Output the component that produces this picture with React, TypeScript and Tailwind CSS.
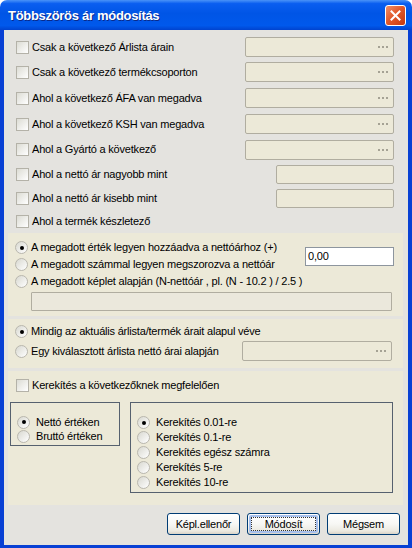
import React from "react";

const Check = () => (
  <span className="w-[13px] h-[13px] shrink-0 border border-[#b4b2a8] bg-[linear-gradient(135deg,#dcdcd4,#ffffff)]" />
);

const Radio = ({ on }: { on?: boolean }) => (
  <span className="w-[13px] h-[13px] shrink-0 rounded-full border border-[#b9b7ae] bg-[linear-gradient(135deg,#d8d8d0,#ffffff)] flex items-center justify-center">
    {on ? <span className="w-[4px] h-[4px] rounded-full bg-black" /> : null}
  </span>
);

const Dots = () => (
  <span className="flex gap-[2px]">
    <span className="w-[2px] h-[2px] bg-[#a5a294]" />
    <span className="w-[2px] h-[2px] bg-[#a5a294]" />
    <span className="w-[2px] h-[2px] bg-[#a5a294]" />
  </span>
);

const Label = ({ children }: { children: React.ReactNode }) => (
  <span className="text-[11px] tracking-[-0.2px] leading-none whitespace-nowrap text-black">{children}</span>
);

const EBox = ({ className }: { className: string }) => (
  <div className={className}>
    <Dots />
  </div>
);

const ebox =
  "ml-auto h-[20px] border border-[#b0ada0] rounded-[2px] bg-[#ece9d8] flex items-center justify-end pr-[5px]";
const pbox = "ml-auto h-[19px] border border-[#b0ada0] rounded-[2px] bg-[#ece9d8]";

const CheckRow = ({
  h,
  label,
  box,
}: {
  h: string;
  label: string;
  box?: React.ReactNode;
}) => (
  <div className={h}>
    <div className="flex items-center h-full">
      <div className="flex items-center gap-[3px]">
        <Check />
        <Label>{label}</Label>
      </div>
      {box}
    </div>
  </div>
);

const Btn = ({ children, focus }: { children: React.ReactNode; focus?: boolean }) => (
  <button className="relative w-[73px] h-[22px] rounded-[3px] border border-[#003c74] bg-[linear-gradient(180deg,#ffffff_0%,#f7f7f4_50%,#ebe9e0_85%,#d8d3c8_100%)] flex items-center justify-center">
    {focus ? (
      <span className="absolute inset-[1px] rounded-[2px] border-2 border-[#a7c0ed]" />
    ) : null}
    {focus ? <span className="absolute inset-[3px] border border-dotted border-[#333]" /> : null}
    <Label>{children}</Label>
  </button>
);

export default function App() {
  return (
    <div className="w-[412px] h-[548px] bg-white font-['Liberation_Sans',Arial,sans-serif] flex flex-col">
      {/* Title bar */}
      <div className="h-[30px] shrink-0 rounded-t-[7px] bg-[linear-gradient(180deg,#4a93f8_0%,#0a5ef0_12%,#0055e6_45%,#0059ec_85%,#0043cf_100%)] flex items-center pl-[8px] pr-[6px]">
        <span className="text-white font-bold text-[13px] tracking-[-0.3px] pt-[2px] [text-shadow:1px_1px_0_#0a2a8a]">
          Többszörös ár módosítás
        </span>
        <div className="ml-auto w-[21px] h-[21px] rounded-[3px] border border-white bg-[linear-gradient(135deg,#f0906a_0%,#e25a2c_45%,#c5380f_100%)] flex items-center justify-center">
          <svg width="11" height="11" viewBox="0 0 11 11">
            <path d="M1.5 1.5 L9.5 9.5 M9.5 1.5 L1.5 9.5" stroke="white" strokeWidth="2" strokeLinecap="square" />
          </svg>
        </div>
      </div>

      {/* Body with frame */}
      <div className="flex-1 flex flex-col border-l-4 border-r-4 border-b-[3px] border-[#0840d4] bg-[#e4e3df]">
        {/* Top checkbox section */}
        <div className="pt-[5px] pl-[12px] pr-[14px]">
          <CheckRow h="h-[24px]" label="Csak a következő Árlista árain" box={<EBox className={`${ebox} w-[149px]`} />} />
          <CheckRow h="h-[26px]" label="Csak a következő termékcsoporton" box={<EBox className={`${ebox} w-[149px]`} />} />
          <CheckRow h="h-[26px]" label="Ahol a következő ÁFA van megadva" box={<EBox className={`${ebox} w-[149px]`} />} />
          <CheckRow h="h-[26px]" label="Ahol a következő KSH van megadva" box={<EBox className={`${ebox} w-[149px]`} />} />
          <CheckRow h="h-[25px]" label="Ahol a Gyártó a következő" box={<EBox className={`${ebox} w-[149px]`} />} />
          <CheckRow h="h-[24px]" label="Ahol a nettó ár nagyobb mint" box={<div className={`${pbox} w-[118px]`} />} />
          <CheckRow h="h-[24px]" label="Ahol a nettó ár kisebb mint" box={<div className={`${pbox} w-[118px]`} />} />
          <CheckRow h="h-[22px]" label="Ahol a termék készletező" />
        </div>

        {/* Panel 2 */}
        <div className="mt-[1px] ml-[4px] mr-[5px] h-[83px] bg-[#ece9d8] pt-[6px] pl-[7px]">
          <div className="flex">
            <div className="flex flex-col">
              <div className="h-[17px] flex items-center gap-[3px]">
                <Radio on />
                <Label>A megadott érték legyen hozzáadva a nettóárhoz (+)</Label>
              </div>
              <div className="h-[17px] flex items-center gap-[3px]">
                <Radio />
                <Label>A megadott számmal legyen megszorozva a nettóár</Label>
              </div>
            </div>
            <div className="ml-auto mr-[9px] mt-[8px] w-[89px] h-[19px] bg-white border border-[#8d959e] flex items-center pl-[2px]">
              <Label>0,00</Label>
            </div>
          </div>
          <div className="h-[17px] flex items-center gap-[3px]">
            <Radio />
            <Label>A megadott képlet alapján (N-nettóár , pl. (N - 10.2 ) / 2.5 )</Label>
          </div>
          <div className="mt-[2px] ml-[16px] w-[361px] h-[19px] border border-[#b0ada0] rounded-[1px] bg-[#ebe8dc]" />
        </div>

        {/* Panel 3 */}
        <div className="mt-[3px] ml-[4px] mr-[5px] h-[49px] bg-[#ece9d8] pt-[4px] pl-[7px] pr-[11px]">
          <div className="h-[17px] flex items-center gap-[3px]">
            <Radio on />
            <Label>Mindig az aktuális árlista/termék árait alapul véve</Label>
          </div>
          <div className="h-[22px] flex items-center">
            <div className="flex items-center gap-[3px]">
              <Radio />
              <Label>Egy kiválasztott árlista nettó árai alapján</Label>
            </div>
            <EBox className={`${ebox} w-[150px]`} />
          </div>
        </div>

        {/* Panel 4 */}
        <div className="mt-[3px] ml-[4px] mr-[5px] h-[134px] bg-[#ece9d8] pt-[6px]">
          <div className="h-[17px] flex items-center gap-[3px] pl-[8px]">
            <Check />
            <Label>Kerekítés a következőknek megfelelően</Label>
          </div>
          <div className="mt-[8px] flex items-start gap-[10px] pl-[2px]">
            <div className="w-[110px] h-[44px] border border-[#56616f] pt-[12px] pl-[6px]">
              <div className="h-[14px] flex items-center gap-[6px]">
                <Radio on />
                <Label>Nettó értéken</Label>
              </div>
              <div className="h-[14px] flex items-center gap-[6px]">
                <Radio />
                <Label>Bruttó értéken</Label>
              </div>
            </div>
            <div className="w-[263px] h-[91px] border border-[#56616f] pt-[12px] pl-[6px]">
              {["Kerekítés 0.01-re", "Kerekítés 0.1-re", "Kerekítés egész számra", "Kerekítés 5-re", "Kerekítés 10-re"].map(
                (t, i) => (
                  <div key={t} className="h-[15px] flex items-center gap-[6px]">
                    <Radio on={i === 0} />
                    <Label>{t}</Label>
                  </div>
                )
              )}
            </div>
          </div>
        </div>

        {/* Buttons */}
        <div className="pt-[8px] pr-[8px] flex justify-end gap-[7px]">
          <Btn>Képl.ellenőr</Btn>
          <Btn focus>Módosít</Btn>
          <Btn>Mégsem</Btn>
        </div>
      </div>
    </div>
  );
}
